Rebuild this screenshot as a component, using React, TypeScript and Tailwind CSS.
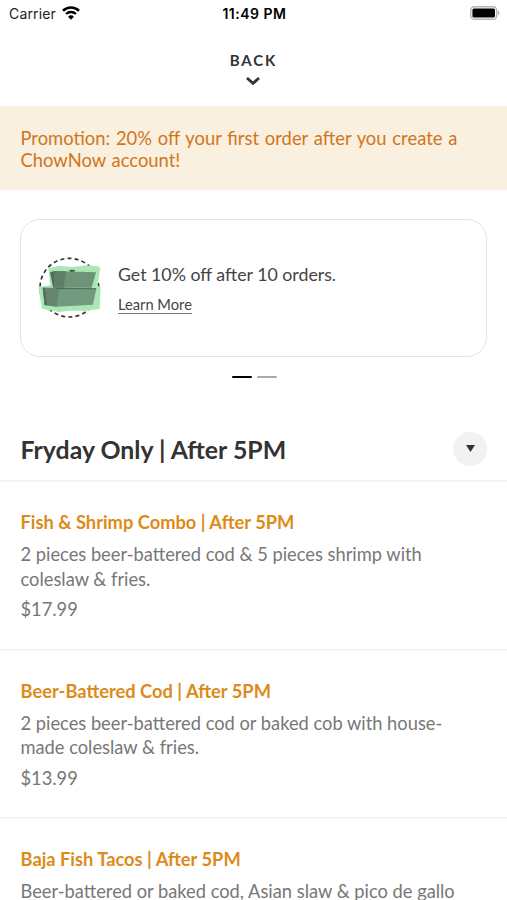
type MenuItem = {
  name: string
  description: string
  price: string
}

const items: MenuItem[] = [
  {
    name: 'Fish & Shrimp Combo | After 5PM',
    description: '2 pieces beer-battered cod & 5 pieces shrimp with coleslaw & fries.',
    price: '$17.99',
  },
  {
    name: 'Beer-Battered Cod | After 5PM',
    description: '2 pieces beer-battered cod or baked cob with house-made coleslaw & fries.',
    price: '$13.99',
  },
  {
    name: 'Baja Fish Tacos | After 5PM',
    description: 'Beer-battered or baked cod, Asian slaw & pico de gallo',
    price: '',
  },
]

function StatusBar() {
  return (
    <div className="grid h-[26px] grid-cols-3 items-center pl-[9px] pr-[7px] font-['Inter',sans-serif] text-[14px] text-black">
      <div className="flex items-center gap-[6px]">
        <span className="tracking-[0.15px] text-[#222]">Carrier</span>
        <svg width="18" height="14" viewBox="0 0 18 14" fill="none" stroke="black">
          <path d="M1 4.8a11.4 11.4 0 0 1 16 0" strokeWidth="2.6" />
          <path d="M4 8a7.2 7.2 0 0 1 10 0" strokeWidth="2.3" />
          <path d="M9 13.7 6.1 10.8a4.1 4.1 0 0 1 5.8 0z" fill="black" stroke="none" />
        </svg>
      </div>
      <span className="whitespace-nowrap text-center font-semibold tracking-[0.5px]">11:49 PM</span>
      <div className="flex justify-end">
        <svg width="30" height="14" viewBox="0 0 30 14">
          <rect x="0.7" y="0.7" width="26" height="12.6" rx="3.8" fill="#fff" stroke="#b4b4b4" strokeWidth="1.4" />
          <rect x="2.4" y="2.4" width="22.6" height="9.2" rx="1.6" fill="#000" />
          <path d="M28 4.8c2 .7 2 3.7 0 4.4z" fill="#b4b4b4" />
        </svg>
      </div>
    </div>
  )
}

function BoxesArt() {
  return (
    <svg width="68" height="66" viewBox="0 0 204 198" className="shrink-0">
      <circle cx="100" cy="98" r="88" fill="#fff" stroke="#333" strokeWidth="5" strokeDasharray="12 9.5" />
      <path
        d="M37 40 70 32 108 36 150 31 187 34 193 40 184 92 194 97 191 162 150 167 100 167 70 171 18 161 7 97 42 91Z"
        fill="#a9e8b5"
      />
      <path d="M42 51 57 48 60 97 51 97Z" fill="#536d59" />
      <path d="M57 48 180 52 167 98 54 98Z" fill="#6e9378" />
      <path d="M57 48 90 49 83 98 54 98Z" fill="#607f69" />
      <path d="M100 44 118 45 113 50 103 50Z" fill="#3e5745" />
      <path d="M20 98 181 100 171 149 62 155 26 150Z" fill="#729a7e" />
      <path d="M20 98 70 99 62 155 26 150Z" fill="#658670" />
      <path d="M20 98 27 98 33 151 26 150Z" fill="#536d59" />
      <path d="M48 98 181 100 180 103 66 102Z" fill="#4e6b56" />
    </svg>
  )
}

function MenuRow({ item }: { item: MenuItem }) {
  return (
    <div className="h-[168.7px] border-b-2 border-[#f4f4f4] pl-[20.5px] pr-[30px] pt-[28px]">
      <h3 className="text-[18.3px] font-bold leading-[25px] text-[#dc8b18]">{item.name}</h3>
      <p className="mt-[7px] text-[18.3px] leading-[24.7px]">{item.description}</p>
      {item.price && <p className="mt-[6px] text-[18.3px] leading-[25px]">{item.price}</p>}
    </div>
  )
}

export default function App() {
  return (
    <div className="h-[900px] w-[507px] overflow-hidden bg-white font-['Lato',sans-serif] text-[#777]">
      <StatusBar />

      <header className="flex h-[81px] flex-col items-center border-b border-[#eee] pt-[24px] text-[#333]">
        <span className="text-[15px] font-bold leading-5 tracking-[1.9px]">BACK</span>
        <svg width="16" height="10" viewBox="0 0 16 10" className="mr-[1px] mt-[6px]" fill="none" stroke="#333" strokeWidth="2.8">
          <path d="M2 2l6 5.4L14 2" />
        </svg>
      </header>

      <div className="h-[83px] bg-[#faf0df] px-[20.5px] pt-[20px] text-[18.4px] leading-[22px] text-[#d1751c] [word-spacing:1.1px]">
        Promotion: 20% off your first order after you create a ChowNow account!
      </div>

      <div className="mx-[20px] mt-[29px] flex h-[138px] items-center gap-[14px] rounded-[20px] border-[1.5px] border-[#e4e4e4] pl-[15px] text-[#444]">
        <BoxesArt />
        <div className="pt-[2px]">
          <p className="text-[17.75px] leading-6">Get 10% off after 10 orders.</p>
          <a className="mt-[10px] inline-block border-b border-[#777] text-[14.7px] leading-[17px]">Learn More</a>
        </div>
      </div>

      <div className="mt-[19px] flex justify-center gap-[5px] pl-[1px]">
        <span className="h-[2px] w-5 rounded-full bg-black" />
        <span className="h-[2px] w-5 rounded-full bg-[#aaa]" />
      </div>

      <div className="mt-[41px] flex h-[63px] items-center justify-between border-b-2 border-[#f4f4f4] px-[20px]">
        <h2 className="pl-[0.5px] text-[24.85px] font-bold text-[#333]">Fryday Only | After 5PM</h2>
        <button className="mb-[2px] flex h-[34px] w-[34px] items-center justify-center rounded-full bg-[#f2f2f2]">
          <svg width="9" height="7" viewBox="0 0 9 7">
            <path d="M0 0h9L4.5 7z" fill="#333" />
          </svg>
        </button>
      </div>

      {items.map((item) => (
        <MenuRow key={item.name} item={item} />
      ))}
    </div>
  )
}
